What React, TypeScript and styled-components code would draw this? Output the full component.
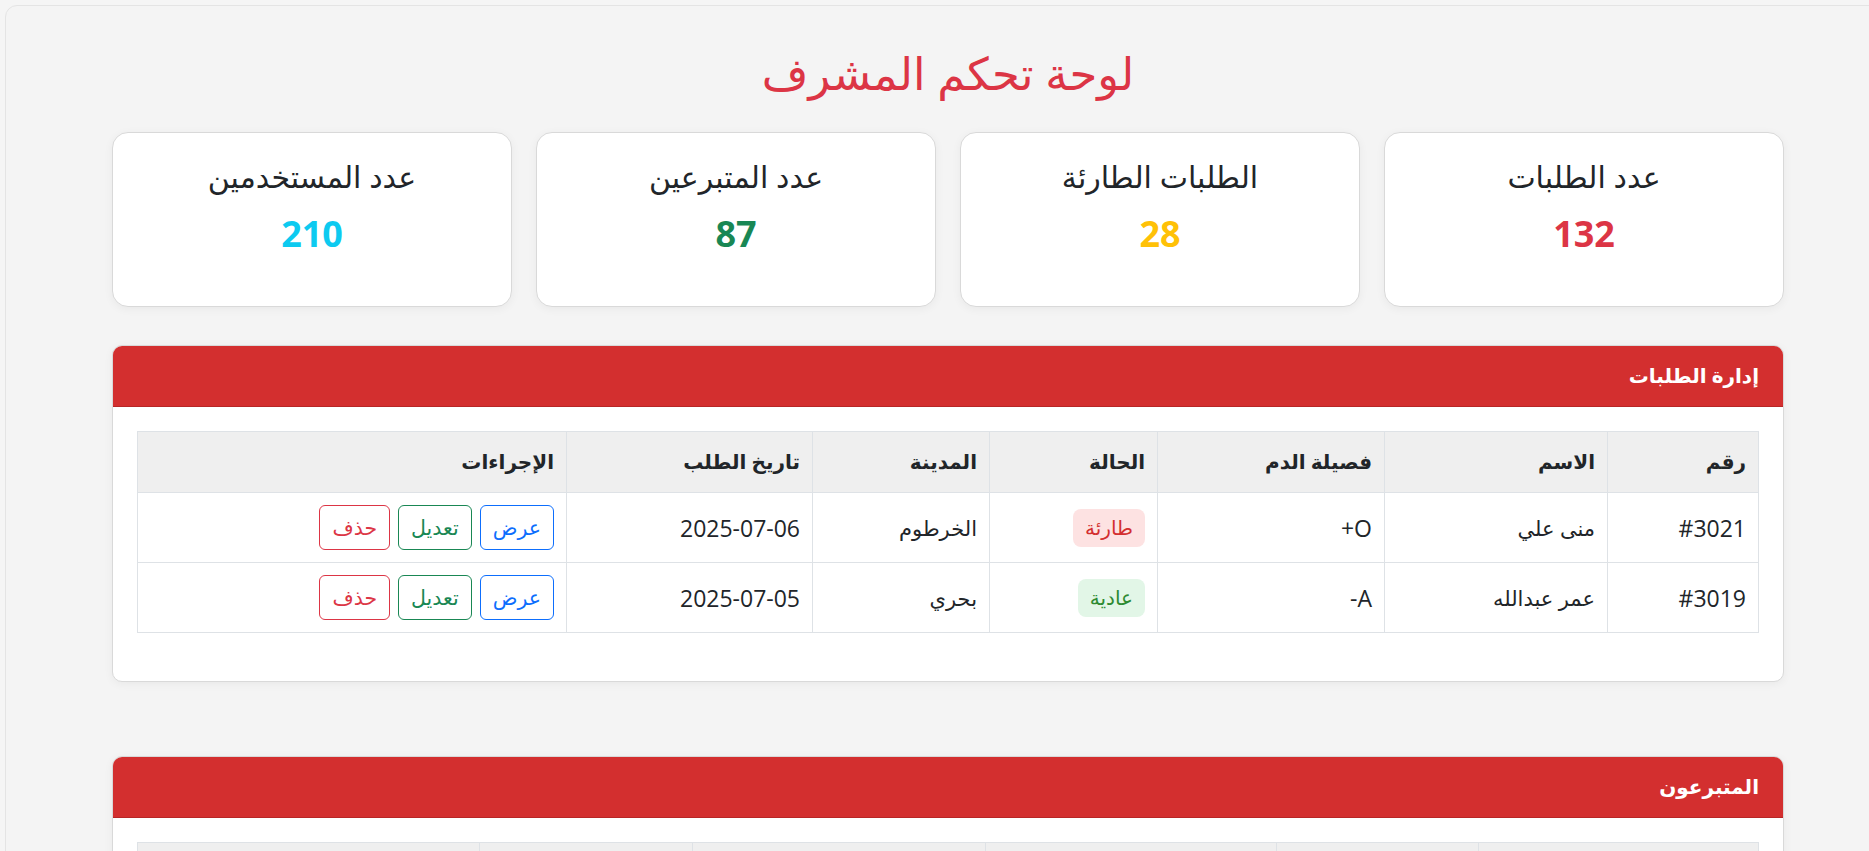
import React from "react";
import styled, { createGlobalStyle } from "styled-components";

const GlobalStyle = createGlobalStyle`
  html, body {
    margin: 0;
    padding: 0;
    background: #f5f5f5;
    overflow-x: hidden;
  }
  body {
    font-family: "Open Sans", "DejaVu Sans", sans-serif;
    color: #212529;
  }
  ::-webkit-scrollbar { display: none; }
  * { box-sizing: border-box; }
`;

const Shell = styled.div`
  width: 1886px;
  margin: 5px 0 0 5px;
  background: #f4f4f4;
  border: 1px solid #e4e4e4;
  border-radius: 12px;
  padding: 36px 0 60px;
`;

const Content = styled.main`
  direction: rtl;
  width: 1672px;
  margin: 0 auto;
`;

const Title = styled.h1`
  margin: 0;
  text-align: center;
  color: #dc3545;
  font-size: 45px;
  font-weight: 500;
  line-height: 62px;
`;

const StatsGrid = styled.section`
  display: grid;
  grid-template-columns: repeat(4, 1fr);
  gap: 24px;
  margin-top: 28px;
`;

const StatCard = styled.div`
  height: 175px;
  background: #fff;
  border: 1px solid #d9d9d9;
  border-radius: 16px;
  box-shadow: 0 2px 10px rgba(0, 0, 0, 0.05);
  padding: 26px 16px 0;
  display: flex;
  flex-direction: column;
  align-items: center;
`;

const StatLabel = styled.h3`
  margin: 0;
  font-size: 30px;
  font-weight: 500;
  line-height: 36px;
  color: #212529;
`;

const StatValue = styled.div<{ $color: string }>`
  margin-top: 14px;
  font-size: 36px;
  font-weight: 700;
  line-height: 50px;
  color: ${(p) => p.$color};
`;

const Panel = styled.section<{ $gap: number }>`
  margin-top: ${(p) => p.$gap}px;
  background: #fff;
  border: 1px solid #d9d9d9;
  border-radius: 10px;
  box-shadow: 0 2px 10px rgba(0, 0, 0, 0.05);
  overflow: hidden;
`;

const PanelHeader = styled.header`
  background: #d32f2f;
  color: #fff;
  padding: 12px 24px;
  font-size: 20px;
  font-weight: 700;
  line-height: 36px;
  border-bottom: 1px solid #b72626;
`;

const PanelBody = styled.div`
  padding: 24px;
`;

const Table = styled.table`
  width: 100%;
  border-collapse: collapse;
  table-layout: fixed;
  margin-bottom: 24px;
`;

const Col = styled.col<{ $w: number }>`
  width: ${(p) => p.$w}px;
`;

const Th = styled.th`
  background: #efefef;
  border: 1px solid #dee2e6;
  padding: 12px;
  text-align: right;
  font-size: 20px;
  font-weight: 700;
  line-height: 36px;
  color: #212529;
`;

const Td = styled.td<{ $latin?: boolean }>`
  border: 1px solid #dee2e6;
  padding: 12px;
  text-align: right;
  font-size: ${(p) => (p.$latin ? "23px" : "21px")};
  line-height: 36px;
  color: #212529;
  vertical-align: middle;
`;

const Badge = styled.span<{ $tone: "urgent" | "normal" }>`
  display: inline-block;
  padding: 1px 12px;
  border-radius: 8px;
  font-size: 20px;
  line-height: 36px;
  background: ${(p) => (p.$tone === "urgent" ? "#fde2e2" : "#e2f6e7")};
  color: ${(p) => (p.$tone === "urgent" ? "#d32f2f" : "#2e8b32")};
`;

const Actions = styled.div`
  display: flex;
  gap: 8px;
`;

const ActionButton = styled.button<{ $color: string }>`
  height: 45px;
  padding: 0 12px;
  background: #fff;
  border: 1px solid ${(p) => p.$color};
  color: ${(p) => p.$color};
  border-radius: 6px;
  font-family: inherit;
  font-size: 20.5px;
  line-height: 31px;
  cursor: pointer;
`;

type Request = {
  id: string;
  name: string;
  blood: string;
  status: "urgent" | "normal";
  city: string;
  date: string;
};

const requests: Request[] = [
  { id: "#3021", name: "منى علي", blood: "O+", status: "urgent", city: "الخرطوم", date: "2025-07-06" },
  { id: "#3019", name: "عمر عبدالله", blood: "A-", status: "normal", city: "بحري", date: "2025-07-05" },
];

const stats = [
  { label: "عدد الطلبات", value: "132", color: "#dc3545" },
  { label: "الطلبات الطارئة", value: "28", color: "#ffc107" },
  { label: "عدد المتبرعين", value: "87", color: "#198754" },
  { label: "عدد المستخدمين", value: "210", color: "#0dcaf0" },
];

const requestCols = [151, 223, 227, 168, 177, 246, 429];
const requestHeads = ["رقم", "الاسم", "فصيلة الدم", "الحالة", "المدينة", "تاريخ الطلب", "الإجراءات"];

const donorCols = [280, 202, 291, 293, 213, 342];
const donorHeads = ["رقم", "الاسم", "فصيلة الدم", "المدينة", "آخر تبرع", "الإجراءات"];

const RowActions = () => (
  <Actions>
    <ActionButton $color="#0d6efd">عرض</ActionButton>
    <ActionButton $color="#198754">تعديل</ActionButton>
    <ActionButton $color="#dc3545">حذف</ActionButton>
  </Actions>
);

export default function App() {
  return (
    <>
      <GlobalStyle />
      <Shell>
        <Content>
          <Title>لوحة تحكم المشرف</Title>
          <StatsGrid>
            {stats.map((s) => (
              <StatCard key={s.label}>
                <StatLabel>{s.label}</StatLabel>
                <StatValue $color={s.color}>{s.value}</StatValue>
              </StatCard>
            ))}
          </StatsGrid>

          <Panel $gap={38}>
            <PanelHeader>إدارة الطلبات</PanelHeader>
            <PanelBody>
              <Table>
                <colgroup>
                  {requestCols.map((w, i) => (
                    <Col key={i} $w={w} />
                  ))}
                </colgroup>
                <thead>
                  <tr>
                    {requestHeads.map((h) => (
                      <Th key={h}>{h}</Th>
                    ))}
                  </tr>
                </thead>
                <tbody>
                  {requests.map((r) => (
                    <tr key={r.id}>
                      <Td $latin>{r.id}</Td>
                      <Td>{r.name}</Td>
                      <Td $latin>{r.blood}</Td>
                      <Td>
                        <Badge $tone={r.status}>{r.status === "urgent" ? "طارئة" : "عادية"}</Badge>
                      </Td>
                      <Td>{r.city}</Td>
                      <Td $latin>{r.date}</Td>
                      <Td>
                        <RowActions />
                      </Td>
                    </tr>
                  ))}
                </tbody>
              </Table>
            </PanelBody>
          </Panel>

          <Panel $gap={74}>
            <PanelHeader>المتبرعون</PanelHeader>
            <PanelBody>
              <Table>
                <colgroup>
                  {donorCols.map((w, i) => (
                    <Col key={i} $w={w} />
                  ))}
                </colgroup>
                <thead>
                  <tr>
                    {donorHeads.map((h) => (
                      <Th key={h}>{h}</Th>
                    ))}
                  </tr>
                </thead>
                <tbody>
                  <tr>
                    <Td $latin>#1042</Td>
                    <Td>أحمد حسن</Td>
                    <Td $latin>B+</Td>
                    <Td>أم درمان</Td>
                    <Td $latin>2025-06-20</Td>
                    <Td>
                      <RowActions />
                    </Td>
                  </tr>
                </tbody>
              </Table>
            </PanelBody>
          </Panel>
        </Content>
      </Shell>
    </>
  );
}
